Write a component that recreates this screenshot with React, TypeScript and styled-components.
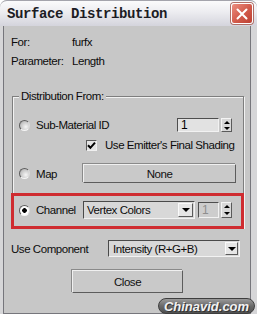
import React from 'react'
import styled, { createGlobalStyle } from 'styled-components'

const GlobalStyle = createGlobalStyle`
  html, body {
    margin: 0;
    padding: 0;
  }
  body {
    width: 257px;
    height: 314px;
    overflow: hidden;
    background: #ffffff;
    font-family: "Liberation Sans", Arial, sans-serif;
  }
`

const Screen = styled.div`
  position: relative;
  width: 257px;
  height: 314px;
  overflow: hidden;
`

const Frame = styled.div`
  width: 257px;
  height: 314px;
  background: #d6d6d8;
  border-radius: 7px 7px 0 0;
  display: flex;
  flex-direction: column;
`

const TitleBar = styled.div`
  height: 28px;
  box-sizing: border-box;
  display: flex;
  align-items: center;
  justify-content: space-between;
  padding: 0 4px 0 7px;
  border-top: 1px solid #a4a4ac;
  border-radius: 7px 7px 0 0;
  background: linear-gradient(#fbfbfc, #ececf0 45%, #d4d4dc);
`

const Title = styled.span`
  font-family: "Liberation Mono", "Courier New", monospace;
  font-weight: bold;
  font-size: 14px;
  letter-spacing: -0.4px;
  color: #1c1c24;
`

const CloseBox = styled.span`
  width: 22px;
  height: 21px;
  box-sizing: border-box;
  border: 1px solid #fff;
  border-radius: 3px;
  box-shadow: 0 0 0 1px #b07068;
  background: linear-gradient(135deg, #ec8e80, #d15a4a 55%, #bd4032);
  display: flex;
  align-items: center;
  justify-content: center;
`

const Body = styled.div`
  flex: none;
  height: 281px;
  margin: 0 6px 0 3px;
  border: 1px solid #76767c;
  border-top: none;
  background: #c7c7c7;
  padding: 6px 6px 0 7px;
  display: flex;
  flex-direction: column;
  font-size: 11.5px;
  letter-spacing: -0.45px;
  color: #0c0c0c;
`

const InfoGrid = styled.div`
  display: grid;
  grid-template-columns: 61px auto;
  grid-auto-rows: 19px;
  align-items: center;
`

const Group = styled.div`
  margin: 26px 0 0 1px;
  padding: 1px;
  border: 1px solid #7e7e7e;
  box-shadow: inset 1px 1px 0 #f2f2f2, 1px 1px 0 #f2f2f2;
  display: flex;
  flex-direction: column;
`

const Legend = styled.div`
  align-self: flex-start;
  margin: -8px 0 0 5px;
  padding: 0 2px;
  line-height: 13px;
  background: #c7c7c7;
`

const OptionRow = styled.div<{ $h: number; $mt: number; $pl?: number }>`
  display: flex;
  align-items: center;
  justify-content: space-between;
  height: ${p => p.$h}px;
  margin-top: ${p => p.$mt}px;
  padding: 0 10px 0 ${p => p.$pl ?? 5}px;
  white-space: nowrap;
`

const Highlight = styled.div`
  display: flex;
  align-items: center;
  height: 18px;
  margin: 10px -2px -3px -3px;
  padding: 5px 9px 7px 5px;
  border: 3px solid #cf2c30;
  white-space: nowrap;
`

const RadioLabel = styled.label<{ $w?: number }>`
  flex: none;
  display: flex;
  align-items: center;
  gap: 6px;
  width: ${p => (p.$w ? `${p.$w}px` : 'auto')};
`

const Radio = styled.span<{ $on?: boolean }>`
  width: 11px;
  height: 11px;
  box-sizing: border-box;
  border-radius: 50%;
  border: 1px solid;
  border-color: #5e5e5e #dcdcdc #f4f4f4 #5e5e5e;
  background: ${p =>
    p.$on
      ? 'radial-gradient(circle, #000 0 2px, #fdfdfd 2.6px)'
      : 'radial-gradient(circle at 65% 65%, #f6f6f6, #b4b4b4 85%)'};
`

const CheckLabel = styled.label`
  flex: none;
  display: flex;
  align-items: center;
  gap: 8px;
`

const CheckBox = styled.span`
  width: 11px;
  height: 11px;
  box-sizing: border-box;
  border: 1px solid;
  border-color: #5a5a5a #f0f0f0 #f0f0f0 #5a5a5a;
  background: #e4e4e4;
  display: flex;
  align-items: center;
  justify-content: center;
`

const Spinner = styled.div<{ $h: number }>`
  flex: none;
  display: flex;
  gap: 2px;
  height: ${p => p.$h}px;
`

const SpinField = styled.div<{ $w: number; $off?: boolean }>`
  width: ${p => p.$w}px;
  box-sizing: border-box;
  border: 1px solid;
  border-color: #4e4e4e #f2f2f2 #f2f2f2 #4e4e4e;
  background: ${p => (p.$off ? '#cdcdcd' : '#e2e2e2')};
  color: ${p => (p.$off ? '#8e8e8e' : '#000')};
  padding-left: 3px;
  font-size: 12px;
  line-height: ${p => (p.$off ? 14 : 12)}px;
`

const SpinArrows = styled.div`
  width: 11px;
  display: flex;
  flex-direction: column;
  box-sizing: border-box;
  border: 1px solid;
  border-color: #f4f4f4 #5a5a5a #5a5a5a #f4f4f4;
  background: #d8d8d8;
`

const SpinHalf = styled.span<{ $down?: boolean }>`
  flex: 1;
  display: flex;
  align-items: center;
  justify-content: center;
  &::before {
    content: '';
    border-left: 3px solid transparent;
    border-right: 3px solid transparent;
    ${p => (p.$down ? 'border-top: 3px solid #000;' : 'border-bottom: 3px solid #000;')}
  }
`

const PushButton = styled.button<{ $w: number; $h: number }>`
  flex: none;
  width: ${p => p.$w}px;
  height: ${p => p.$h}px;
  box-sizing: border-box;
  padding: 0;
  border: 1px solid;
  border-color: #f0f0f0 #5c5c5c #5c5c5c #f0f0f0;
  box-shadow: -1px -1px 0 #8a8a8a;
  background: #c9c9c9;
  font: inherit;
  letter-spacing: inherit;
  color: #111;
`

const Select = styled.div<{ $w: number; $h: number; $pl: number }>`
  flex: none;
  width: ${p => p.$w}px;
  height: ${p => p.$h}px;
  box-sizing: border-box;
  display: flex;
  align-items: center;
  justify-content: space-between;
  padding: 1px 1px 1px ${p => p.$pl}px;
  border: 1px solid;
  border-color: #4a4a4a #f2f2f2 #f2f2f2 #4a4a4a;
  background: #d8d8d8;
`

const DropButton = styled.span<{ $w: number }>`
  width: ${p => p.$w}px;
  align-self: stretch;
  box-sizing: border-box;
  border: 1px solid;
  border-color: #fafafa #5a5a5a #5a5a5a #fafafa;
  background: #e6e6e6;
  display: flex;
  align-items: center;
  justify-content: center;
  &::before {
    content: '';
    border-left: 4px solid transparent;
    border-right: 4px solid transparent;
    border-top: 4px solid #000;
  }
`

const ComponentRow = styled.div`
  display: flex;
  align-items: center;
  justify-content: space-between;
  height: 17px;
  margin-top: 12px;
  padding-right: 4px;
  white-space: nowrap;
`

const Footer = styled.div`
  display: flex;
  justify-content: center;
  margin-top: 13px;
`

const Watermark = styled.div`
  position: absolute;
  right: 2px;
  bottom: 0;
  width: 97px;
  height: 16px;
  box-sizing: border-box;
  border-radius: 8px;
  border: 1px solid #3e3e3e;
  background: linear-gradient(#9a9a9a, #6a6a6a 50%, #505050);
  display: flex;
  align-items: center;
  justify-content: center;
  font-family: "Liberation Sans", Arial, sans-serif;
  font-style: italic;
  font-weight: bold;
  font-size: 13px;
  color: #f2f2f2;
  text-shadow: 1px 1px 0 #333;
`

function SpinBox({ w, h, off }: { w: number; h: number; off?: boolean }) {
  return (
    <Spinner $h={h}>
      <SpinField $w={w} $off={off}>1</SpinField>
      <SpinArrows>
        <SpinHalf />
        <SpinHalf $down />
      </SpinArrows>
    </Spinner>
  )
}

export default function App() {
  return (
    <Screen>
      <GlobalStyle />
      <Frame>
        <TitleBar>
          <Title>Surface Distribution</Title>
          <CloseBox>
            <svg width="12" height="12" viewBox="0 0 12 12">
              <path d="M1.5 1.5 L10.5 10.5 M10.5 1.5 L1.5 10.5" stroke="#fff" strokeWidth="2" strokeLinecap="round" />
            </svg>
          </CloseBox>
        </TitleBar>
        <Body>
          <InfoGrid>
            <span>For:</span>
            <span>furfx</span>
            <span>Parameter:</span>
            <span>Length</span>
          </InfoGrid>

          <Group>
            <Legend>Distribution From:</Legend>
            <OptionRow $h={14} $mt={15}>
              <RadioLabel>
                <Radio />
                Sub-Material ID
              </RadioLabel>
              <SpinBox w={42} h={14} />
            </OptionRow>
            <OptionRow $h={12} $mt={7} $pl={72}>
              <CheckLabel>
                <CheckBox>
                  <svg width="9" height="9" viewBox="0 0 9 9">
                    <path d="M1 4.2 L3.4 6.8 L8 1.6" stroke="#000" strokeWidth="2" fill="none" />
                  </svg>
                </CheckBox>
                Use Emitter's Final Shading
              </CheckLabel>
            </OptionRow>
            <OptionRow $h={19} $mt={13}>
              <RadioLabel $w={64}>
                <Radio />
                Map
              </RadioLabel>
              <PushButton $w={153} $h={19} style={{ marginRight: -4 }}>None</PushButton>
            </OptionRow>
            <Highlight>
              <RadioLabel $w={64}>
                <Radio $on />
                Channel
              </RadioLabel>
              <Select $w={112} $h={18} $pl={3}>
                Vertex Colors
                <DropButton $w={15} />
              </Select>
              <div style={{ width: 3 }} />
              <SpinBox w={21} h={16} off />
            </Highlight>
          </Group>

          <ComponentRow>
            <span>Use Component</span>
            <Select $w={132} $h={17} $pl={4}>
              Intensity (R+G+B)
              <DropButton $w={13} />
            </Select>
          </ComponentRow>

          <Footer>
            <PushButton $w={111} $h={23}>Close</PushButton>
          </Footer>
        </Body>
      </Frame>
      <Watermark>Chinavid.com</Watermark>
    </Screen>
  )
}
